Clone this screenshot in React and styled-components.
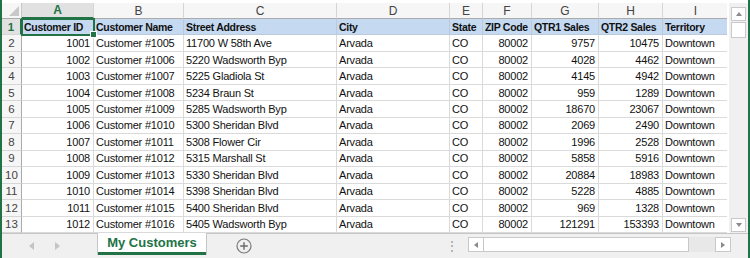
import React from 'react'
import styled, { createGlobalStyle } from 'styled-components'

const GREEN = '#217346'
const GRID = '#dadada'

const COLUMNS = [
  { key: 'A', width: 72, title: 'Customer ID', align: 'right' },
  { key: 'B', width: 90, title: 'Customer Name' },
  { key: 'C', width: 153, title: 'Street Address' },
  { key: 'D', width: 113, title: 'City' },
  { key: 'E', width: 33, title: 'State' },
  { key: 'F', width: 49, title: 'ZIP Code', align: 'right' },
  { key: 'G', width: 67, title: 'QTR1 Sales', align: 'right' },
  { key: 'H', width: 64, title: 'QTR2 Sales', align: 'right' },
  { key: 'I', width: 66, title: 'Territory' },
]

const ROWS = [
  [1001, 'Customer #1005', '11700 W 58th Ave', 9757, 10475],
  [1002, 'Customer #1006', '5220 Wadsworth Byp', 4028, 4462],
  [1003, 'Customer #1007', '5225 Gladiola St', 4145, 4942],
  [1004, 'Customer #1008', '5234 Braun St', 959, 1289],
  [1005, 'Customer #1009', '5285 Wadsworth Byp', 18670, 23067],
  [1006, 'Customer #1010', '5300 Sheridan Blvd', 2069, 2490],
  [1007, 'Customer #1011', '5308 Flower Cir', 1996, 2528],
  [1008, 'Customer #1012', '5315 Marshall St', 5858, 5916],
  [1009, 'Customer #1013', '5330 Sheridan Blvd', 20884, 18983],
  [1010, 'Customer #1014', '5398 Sheridan Blvd', 5228, 4885],
  [1011, 'Customer #1015', '5400 Sheridan Blvd', 969, 1328],
  [1012, 'Customer #1016', '5405 Wadsworth Byp', 121291, 153393],
].map(([id, name, street, q1, q2]) => [id, name, street, 'Arvada', 'CO', '80002', q1, q2, 'Downtown'])

const GlobalStyle = createGlobalStyle`
  body {
    margin: 0;
    background: #fff;
  }
`

const Frame = styled.div`
  width: 750px;
  height: 258px;
  box-sizing: border-box;
  border-left: 2px solid ${GREEN};
  border-right: 2px solid ${GREEN};
  display: flex;
  flex-direction: column;
  padding-top: 3px;
  background: #fff;
  font-family: 'Liberation Sans', Arial, sans-serif;
  overflow: hidden;
`

const Main = styled.div`
  display: flex;
  height: 230px;
`

const Sheet = styled.div`
  display: grid;
  grid-template-columns: 20px ${COLUMNS.map(c => c.width + 'px').join(' ')};
  grid-template-rows: 16px repeat(13, 1fr);
  width: 727px;
  overflow: hidden;
`

const Corner = styled.div`
  background: #f6f6f6;
  border-right: 1px solid #c6c6c6;
  border-bottom: 1px solid #ababab;
  box-sizing: border-box;
  display: flex;
  align-items: flex-end;
  justify-content: flex-end;
  padding: 0 2px 2px 0;
`

const ColHead = styled.div`
  box-sizing: border-box;
  background: ${p => (p.$active ? '#e1e1e1' : '#f6f6f6')};
  border-right: 1px solid #d6d6d6;
  border-bottom: ${p => (p.$active ? `2px solid ${GREEN}` : '1px solid #ababab')};
  color: ${p => (p.$active ? GREEN : '#444')};
  font-weight: ${p => (p.$active ? 'bold' : 'normal')};
  font-size: 12px;
  display: flex;
  align-items: center;
  justify-content: center;
`

const RowHead = styled.div`
  box-sizing: border-box;
  background: ${p => (p.$active ? '#e1e1e1' : '#f6f6f6')};
  border-right: ${p => (p.$active ? `2px solid ${GREEN}` : '1px solid #ababab')};
  border-bottom: 1px solid #d6d6d6;
  color: ${p => (p.$active ? GREEN : '#444')};
  font-weight: ${p => (p.$active ? 'bold' : 'normal')};
  font-size: 11.5px;
  display: flex;
  align-items: center;
  justify-content: center;
`

const Cell = styled.div`
  position: relative;
  box-sizing: border-box;
  border-right: 1px solid ${p => (p.$header ? '#b9c9de' : GRID)};
  border-bottom: 1px solid ${p => (p.$header ? '#b9c9de' : GRID)};
  background: ${p => (p.$header ? '#c5d9f1' : '#fff')};
  color: #111;
  font-size: ${p => (p.$header ? '10.5px' : '11px')};
  letter-spacing: ${p => (p.$header ? '-0.3px' : '-0.2px')};
  font-weight: ${p => (p.$header ? 'bold' : 'normal')};
  white-space: nowrap;
  overflow: ${p => (p.$selected ? 'visible' : 'hidden')};
  display: flex;
  align-items: center;
  justify-content: ${p => (p.$align === 'right' ? 'flex-end' : 'flex-start')};
  padding: 0 3px 0 2px;
  outline: ${p => (p.$selected ? `2px solid ${GREEN}` : 'none')};
  outline-offset: -1px;
  z-index: ${p => (p.$selected ? 2 : 0)};
`

const Handle = styled.span`
  position: absolute;
  right: -4px;
  bottom: -4px;
  width: 5px;
  height: 5px;
  background: ${GREEN};
  border: 1px solid #fff;
`

const VScroll = styled.div`
  width: 19px;
  margin-left: 2px;
  background: #f0f0f0;
  display: flex;
  flex-direction: column;
  padding: 4px 0 1px 2px;
  box-sizing: border-box;
`

const ScrollBox = styled.div`
  width: ${p => p.$w || 15}px;
  height: ${p => p.$h || 14}px;
  box-sizing: border-box;
  background: #fff;
  border: 1px solid #c9c9c9;
  display: flex;
  align-items: center;
  justify-content: center;
  flex-shrink: 0;
`

const Spacer = styled.div`
  flex: 1;
`

const TabBar = styled.div`
  flex: 1;
  display: flex;
  align-items: stretch;
  background: #f0f0f0;
  border-top: 1px solid #c6c6c6;
`

const NavArrows = styled.div`
  width: 96px;
  display: flex;
  align-items: center;
  gap: 21px;
  padding-left: 27px;
  box-sizing: border-box;
`

const Tab = styled.div`
  width: 108px;
  margin-top: -1px;
  margin-bottom: 3px;
  background: #fff;
  border-bottom: 3px solid ${GREEN};
  box-shadow: 1px 0 0 #c6c6c6, -1px 0 0 #c6c6c6;
  color: ${GREEN};
  font-weight: bold;
  font-size: 13px;
  display: flex;
  align-items: center;
  justify-content: center;
`

const AddSheet = styled.div`
  margin-left: 30px;
  display: flex;
  align-items: center;
`

const Dots = styled.div`
  margin-left: 194px;
  display: flex;
  align-items: center;
  color: #9a9a9a;
  font-size: 12px;
`

const HScroll = styled.div`
  margin-left: 10px;
  margin-top: 3px;
  width: 263px;
  height: 15px;
  display: flex;
  background: #e8e8e8;
`

const Arrow = ({ dir }) => {
  const pts = {
    up: '1,5 4,1 7,5',
    down: '1,1 4,5 7,1',
    left: '5,1 1,4 5,7',
    right: '1,1 5,4 1,7',
  }[dir]
  const vertical = dir === 'up' || dir === 'down'
  return (
    <svg width={vertical ? 8 : 6} height={vertical ? 6 : 8} viewBox={vertical ? '0 0 8 6' : '0 0 6 8'}>
      <polygon points={pts} fill="#8a8a8a" />
    </svg>
  )
}

const App = () => (
  <>
    <GlobalStyle />
    <Frame>
      <Main>
        <Sheet>
          <Corner>
            <svg width="10" height="10" viewBox="0 0 10 10">
              <polygon points="10,0 10,10 0,10" fill="#c8c8c8" />
            </svg>
          </Corner>
          {COLUMNS.map(c => (
            <ColHead key={c.key} $active={c.key === 'A'}>
              {c.key}
            </ColHead>
          ))}

          <RowHead $active>1</RowHead>
          {COLUMNS.map((c, i) => (
            <Cell key={c.key} $header $selected={i === 0}>
              {c.title}
              {i === 0 && <Handle />}
            </Cell>
          ))}

          {ROWS.map((row, r) => (
            <React.Fragment key={r}>
              <RowHead>{r + 2}</RowHead>
              {row.map((v, i) => (
                <Cell key={i} $align={COLUMNS[i].align}>
                  {v}
                </Cell>
              ))}
            </React.Fragment>
          ))}
        </Sheet>
        <VScroll>
          <ScrollBox>
            <Arrow dir="up" />
          </ScrollBox>
          <ScrollBox $h={16} style={{ marginTop: 1 }} />
          <Spacer />
          <ScrollBox>
            <Arrow dir="down" />
          </ScrollBox>
        </VScroll>
      </Main>
      <TabBar>
        <NavArrows>
          <svg width="5" height="8" viewBox="0 0 5 8">
            <polygon points="5,0 0,4 5,8" fill="#c4c4c4" />
          </svg>
          <svg width="5" height="8" viewBox="0 0 5 8">
            <polygon points="0,0 5,4 0,8" fill="#c4c4c4" />
          </svg>
        </NavArrows>
        <Tab>My Customers</Tab>
        <AddSheet>
          <svg width="16" height="16" viewBox="0 0 16 16">
            <circle cx="8" cy="8" r="7" fill="none" stroke="#7a7a7a" strokeWidth="1.2" />
            <path d="M8 4.2v7.6M4.2 8h7.6" stroke="#6a6a6a" strokeWidth="1.4" />
          </svg>
        </AddSheet>
        <Dots>⋮</Dots>
        <HScroll>
          <ScrollBox $w={16} $h={15}>
            <Arrow dir="left" />
          </ScrollBox>
          <ScrollBox $w={205} $h={15} style={{ borderLeft: 'none' }} />
          <Spacer />
          <ScrollBox $w={16} $h={15}>
            <Arrow dir="right" />
          </ScrollBox>
        </HScroll>
      </TabBar>
    </Frame>
  </>
)

export default App
